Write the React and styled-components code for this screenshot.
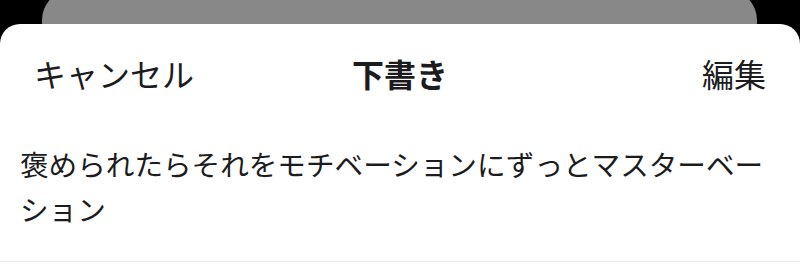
import React from "react";
import styled, { createGlobalStyle } from "styled-components";

const Global = createGlobalStyle`
  html, body { margin: 0; padding: 0; background: #000; }
  body { font-family: "Noto Sans CJK JP", "Noto Sans", sans-serif; }
  #root { width: 800px; height: 269px; overflow: hidden; }
`;

const Screen = styled.div`
  width: 800px;
  height: 269px;
  background: #000;
  overflow: hidden;
  display: flex;
  flex-direction: column;
`;

const BackCard = styled.div`
  flex: 0 0 auto;
  height: 34px;
  margin: -10px 43px 0 42px;
  background: #888888;
  border-radius: 30px 30px 0 0;
`;

const Sheet = styled.div`
  flex: 1 1 auto;
  background: #fff;
  border-radius: 20px 20px 0 0;
  display: flex;
  flex-direction: column;
`;

const Header = styled.div`
  height: 98px;
  display: grid;
  grid-template-columns: 1fr auto 1fr;
  align-items: center;
  padding: 0 34px 0 34px;
  color: #1c1c1e;
  font-size: 32px;
  line-height: 1;
`;

const NavButton = styled.span`
  justify-self: ${(p) => (p.$right ? "end" : "start")};
  font-weight: 400;
`;

const Title = styled.span`
  font-weight: 700;
`;

const Body = styled.div`
  padding: 19px 20px 30px 20px;
  font-size: 28.6px;
  line-height: 45px;
  color: #1c1c1e;
  border-bottom: 1px solid #e6e9ee;
`;

export default function App() {
  return (
    <>
      <Global />
      <Screen>
        <BackCard />
        <Sheet>
          <Header>
            <NavButton>キャンセル</NavButton>
            <Title>下書き</Title>
            <NavButton $right>編集</NavButton>
          </Header>
          <Body>褒められたらそれをモチベーションにずっとマスターベーション</Body>
        </Sheet>
      </Screen>
    </>
  );
}
